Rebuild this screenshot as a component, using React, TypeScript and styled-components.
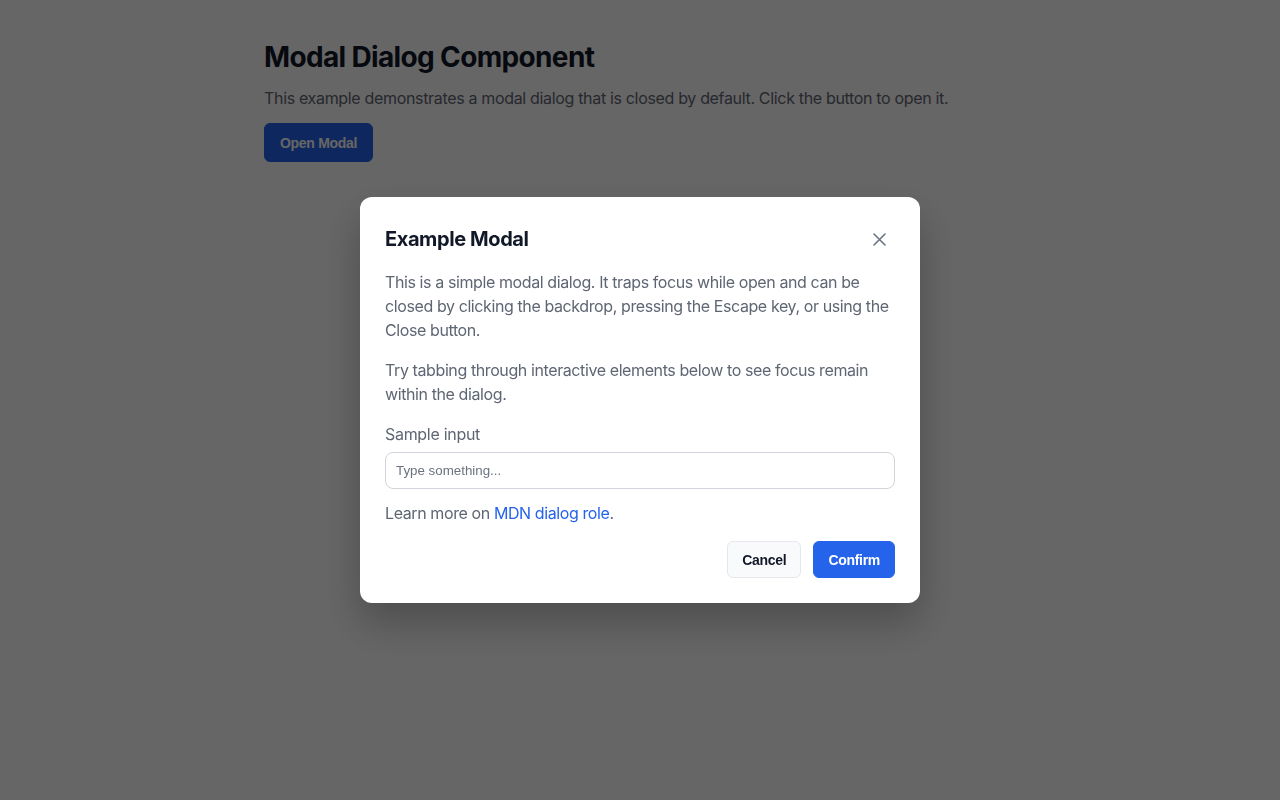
import React from "react";
import styled, { createGlobalStyle } from "styled-components";

const Global = createGlobalStyle`
  html, body { margin: 0; padding: 0; }
  body {
    background: #ffffff;
    font-family: Inter, "Noto Sans", sans-serif;
    color: #111827;
    min-height: 800px;
  }
  * { box-sizing: border-box; }
`;

const Page = styled.main`
  max-width: 800px;
  margin: 0 auto;
  padding: 40px 24px;
`;

const Heading = styled.h1`
  font-size: 28px;
  line-height: 34px;
  font-weight: 700;
  margin: 0 0 12px;
  letter-spacing: -0.65px;
`;

const Lead = styled.p`
  font-size: 16px;
  line-height: 24px;
  color: #5f6673;
  margin: 0 0 13px;
  letter-spacing: -0.33px;
`;

const Button = styled.button<{ $variant?: "primary" | "secondary" }>`
  font-family: "Liberation Sans", Arial, sans-serif;
  font-size: 14px;
  font-weight: 700;
  letter-spacing: -0.3px;
  height: 37px;
  padding: 0 14px;
  border-radius: 6px;
  cursor: pointer;
  border: 1px solid ${(p) => (p.$variant === "secondary" ? "#e5e7eb" : "#2563eb")};
  background: ${(p) => (p.$variant === "secondary" ? "#f9fafb" : "#2563eb")};
  color: ${(p) => (p.$variant === "secondary" ? "#111827" : "#ffffff")};
`;

const OpenButton = styled(Button)`
  height: 39px;
  padding: 0 15px;
`;

const Backdrop = styled.div`
  position: fixed;
  inset: 0;
  background: rgba(0, 0, 0, 0.6);
  display: flex;
  justify-content: center;
  align-items: flex-start;
  padding-top: 197px;
`;

const Dialog = styled.div`
  width: 560px;
  background: #ffffff;
  border-radius: 12px;
  padding: 25px;
  box-shadow: 0 20px 40px rgba(0, 0, 0, 0.25);
`;

const Header = styled.div`
  display: flex;
  align-items: center;
  justify-content: space-between;
  height: 34px;
  margin-bottom: 14px;
`;

const Title = styled.h2`
  font-size: 20px;
  line-height: 28px;
  font-weight: 700;
  margin: 0;
  letter-spacing: -0.4px;
`;

const CloseButton = styled.button`
  width: 30px;
  height: 30px;
  margin-right: 1px;
  display: flex;
  align-items: center;
  justify-content: center;
  background: transparent;
  border: none;
  border-radius: 6px;
  color: #6b7280;
  cursor: pointer;
  padding: 0;
`;

const Text = styled.p<{ $gap?: number }>`
  font-size: 16px;
  line-height: 24px;
  color: #5f6673;
  letter-spacing: -0.4px;
  margin: 0 0 ${(p) => p.$gap ?? 16}px;
`;

const Label = styled.label`
  display: block;
  font-size: 16px;
  line-height: 24px;
  color: #5f6673;
  letter-spacing: -0.3px;
  margin-bottom: 6px;
`;

const Input = styled.input`
  display: block;
  width: 100%;
  height: 37px;
  padding: 0 10px;
  border: 1px solid #d1d5db;
  border-radius: 8px;
  font-family: "Liberation Sans", Arial, sans-serif;
  font-size: 13.33px;
  color: #111827;
  margin-bottom: 12px;
  &::placeholder { color: #6b7280; }
`;

const Link = styled.a`
  color: #2563eb;
  text-decoration: none;
`;

const Footer = styled.div`
  display: flex;
  justify-content: flex-end;
  gap: 12px;
`;

export default function App() {
  return (
    <>
      <Global />
      <Page>
        <Heading>Modal Dialog Component</Heading>
        <Lead>
          This example demonstrates a modal dialog that is closed by default. Click the button to open it.
        </Lead>
        <OpenButton>Open Modal</OpenButton>
      </Page>
      <Backdrop>
        <Dialog role="dialog" aria-modal="true" aria-labelledby="modal-title">
          <Header>
            <Title id="modal-title">Example Modal</Title>
            <CloseButton aria-label="Close">
              <svg width="13" height="13" viewBox="0 0 13 13" fill="none" stroke="currentColor" strokeWidth="1.6" strokeLinecap="round">
                <path d="M1 1L12 12M12 1L1 12" />
              </svg>
            </CloseButton>
          </Header>
          <Text>
            This is a simple modal dialog. It traps focus while open and can be closed by clicking the backdrop,
            pressing the Escape key, or using the Close button.
          </Text>
          <Text>Try tabbing through interactive elements below to see focus remain within the dialog.</Text>
          <Label htmlFor="sample">Sample input</Label>
          <Input id="sample" placeholder="Type something..." />
          <Text $gap={16}>
            Learn more on <Link href="#">MDN dialog role</Link>.
          </Text>
          <Footer>
            <Button $variant="secondary">Cancel</Button>
            <Button>Confirm</Button>
          </Footer>
        </Dialog>
      </Backdrop>
    </>
  );
}
